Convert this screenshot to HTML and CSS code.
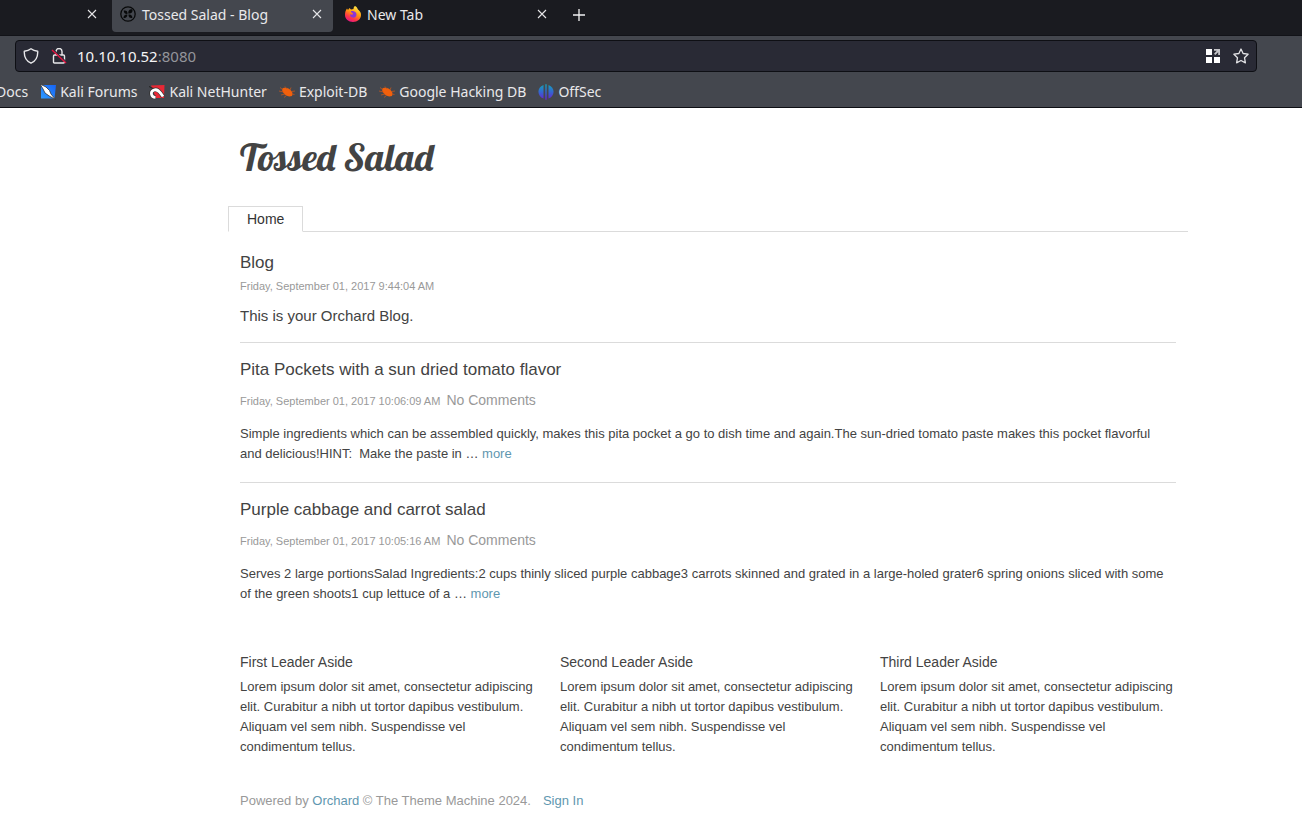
FILE: index.html
```html
<!DOCTYPE html>
<html lang="en">
<head>
<meta charset="utf-8">
<title>Tossed Salad - Blog</title>
<link rel="stylesheet" href="styles.css">
</head>
<body>
<svg class="defs" aria-hidden="true">
  <defs>
    <linearGradient id="fox" x1="0.8" y1="0" x2="0.3" y2="1"><stop offset="0" stop-color="#fff44f"/><stop offset=".45" stop-color="#ff980e"/><stop offset=".75" stop-color="#ff3647"/><stop offset="1" stop-color="#e31587"/></linearGradient>
    <linearGradient id="off" gradientUnits="userSpaceOnUse" x1="0" y1="0" x2="0" y2="16"><stop offset="0" stop-color="#12a5b8"/><stop offset=".5" stop-color="#3466d0"/><stop offset="1" stop-color="#6a1fd0"/></linearGradient>
    <linearGradient id="blue" x1="0" y1="1" x2="1" y2="0"><stop offset="0" stop-color="#2f9bff"/><stop offset="1" stop-color="#1663f5"/></linearGradient>
    <symbol id="close" viewBox="0 0 10 10"><path d="M1 1l8 8M9 1L1 9" fill="none" stroke="#e6e6e8" stroke-width="1.1"/></symbol>
    <symbol id="bug" viewBox="0 0 16 16"><path d="M3 5C4.500 3 9 3.500 11.500 6c2 2 2.500 3.500 1.500 6-2.500.8-4.500.5-6.500-1C4.500 9.500 3 7.500 3 5z" fill="#f2600c"/><path d="M4 6L1 3.500M4.500 8L0 7M6 10l-4 1M8 11l-3 2.500M8 5L6 2.500M11 6l1-2.500M12.500 7.500L16 7M13 10l2.500.5" fill="none" stroke="#c2571d" stroke-width=".8"/></symbol>
  </defs>
</svg>
<header class="browser">
  <div class="tabs">
    <div class="tab tab-first"><button class="icon-button" aria-label="Close tab"><svg class="close"><use href="#close"/></svg></button></div>
    <div class="tab tab-active">
      <svg class="icon" viewBox="0 0 16 16"><circle cx="8" cy="8" r="7.200" fill="none" stroke="#08090a" stroke-width="1.300"/><path d="M7.500 8C5 8.300 3.500 6.500 3.800 4.500 6 4 7.800 5 7.500 8zM8.300 7.500C8 5 9.500 2.800 12.500 3.500 13 6.500 11 8 8.300 7.500zM7.300 8.600C7.500 11 6 12.500 3.500 12 3.500 10 5 8.300 7.300 8.600zM8.500 8.500c2.500-.3 4 1 3.800 3.500-2.300.5-4-.8-3.800-3.500z" fill="#08090a"/></svg>
      <span class="tab-title">Tossed Salad - Blog</span>
      <button class="icon-button" aria-label="Close tab"><svg class="close"><use href="#close"/></svg></button>
    </div>
    <div class="tab tab-new">
      <svg class="icon" viewBox="0 0 16 16"><path d="M10 0c2 1 2.500 2.500 3 3.500 2 1.500 3 3 3 5.500 0 4-3.500 7-8 7s-8-3-8-7c0-2.500.5-4.500 2-6.500L3 4l1.500-2L6 3.500 8.500 3C8.500 1.500 9 .5 10 0z" fill="url(#fox)"/><path d="M6 5c3-.5 5.500 1 5.500 3.500S9.500 12 7.500 11.500 5 10 5 8.500l2.500.3L8 7.500 6 6z" fill="#8b35d8"/></svg>
      <span class="tab-title">New Tab</span>
      <button class="icon-button" aria-label="Close tab"><svg class="close"><use href="#close"/></svg></button>
    </div>
    <button class="icon-button add" aria-label="New tab"><svg class="plus" viewBox="0 0 14 14"><path d="M7 1v12M1 7h12" fill="none" stroke="#f1f1f2" stroke-width="1.300"/></svg></button>
  </div>
  <div class="toolbar">
    <div class="address">
      <svg class="icon" viewBox="0 0 16 16"><path d="M8 .8c2 1.500 4 2.100 6.700 2.400.3 5.500-1.800 9.800-6.700 12C3.100 13 1 8.700 1.300 3.200 4 2.900 6 2.300 8 .8z" fill="none" stroke="#e8e8ea" stroke-width="1.400" stroke-linejoin="round"/></svg>
      <svg class="icon" viewBox="0 0 16 16"><path d="M5 7V3.500a3 3 0 0 1 6 0V7M3.500 7h9q1 0 1 1v6q0 1-1 1h-9q-1 0-1-1V8q0-1 1-1z" fill="none" stroke="#e8e8ea" stroke-width="1.400"/><path d="M2 1.500l14 13" stroke="#292a35" stroke-width="1.200"/><path d="M1 2l14 13" stroke="#e2123f" stroke-width="1.400"/></svg>
      <a class="url" href="#">10.10.10.52<span class="port">:8080</span></a>
      <button class="icon-button" aria-label="Apps"><svg class="icon" viewBox="0 0 16 16"><path d="M1 1h6v6H1zM1 9h6v6H1zM9 9h6v6H9z" fill="#fff"/><path d="M9 1h6v6h-1.800V4.200L10.300 7 9 5.700l2.800-2.900H9z" fill="#c4c4c8"/></svg></button>
      <button class="icon-button" aria-label="Bookmark this page"><svg class="icon" viewBox="0 0 16 16"><path d="M8 1l2.100 4.500 5 .7-3.600 3.500.9 5.100L8 12.500l-4.400 2.300.9-5.100L.9 6.200l5-.7z" fill="none" stroke="#e2e2e5" stroke-width="1.300" stroke-linejoin="round"/></svg></button>
    </div>
  </div>
  <nav class="bookmarks">
    <a href="#">Docs</a>
    <a href="#"><svg class="icon" viewBox="0 0 16 16"><path d="M1 1h15l-1.500 13.500H1z" fill="url(#blue)"/><path d="M0 0l6 3 3.500 3.500L11 10l4.500 5.500L10 12.500 5 9 3 5z" fill="#fff" stroke="#333" stroke-width=".8"/></svg>Kali Forums</a>
    <a href="#"><svg class="icon" viewBox="0 0 16 16"><path d="M2 1.500l13.500-.5L15 14H7z" fill="#e92835"/><path d="M6.500 13.500C2 13 1 8 4.500 6.200S10.500 7 14 12.500" fill="none" stroke="#333" stroke-width="4.200"/><path d="M0 2.500l3 1.500 3 .8" fill="none" stroke="#222" stroke-width="1"/><path d="M6.500 13.500C2 13 1 8 4.500 6.200S10.500 7 14 12.500" fill="none" stroke="#fff" stroke-width="2.700"/></svg>Kali NetHunter</a>
    <a href="#"><svg class="icon"><use href="#bug"/></svg>Exploit-DB</a>
    <a href="#"><svg class="icon"><use href="#bug"/></svg>Google Hacking DB</a>
    <a href="#"><svg class="icon" viewBox="0 0 16 16"><path d="M5.500 1v13.500C-1 12.500-1.500 3.500 5.500 1zM7.300.3h1.400v15.500H7.300zM10.500 1v13.500c6.500-2 7-11 0-13.500z" fill="url(#off)"/></svg>OffSec</a>
  </nav>
</header>
<div class="page">
  <h1 class="site-name">Tossed Salad</h1>
  <nav class="menu"><a class="menu-item" href="#">Home</a></nav>
  <main class="content">
    <section class="intro">
      <h2>Blog</h2>
      <p class="date">Friday, September 01, 2017 9:44:04 AM</p>
      <p class="description">This is your Orchard Blog.</p>
    </section>
    <article class="post">
      <h2>Pita Pockets with a sun dried tomato flavor</h2>
      <p class="meta"><span class="date">Friday, September 01, 2017 10:06:09 AM</span><span class="comments">No Comments</span></p>
      <p class="summary">Simple ingredients which can be assembled quickly, makes this pita pocket a go to dish time and again.The sun-dried tomato paste makes this pocket flavorful and delicious!HINT:&nbsp; Make the paste in … <a href="#">more</a></p>
    </article>
    <article class="post">
      <h2>Purple cabbage and carrot salad</h2>
      <p class="meta"><span class="date">Friday, September 01, 2017 10:05:16 AM</span><span class="comments">No Comments</span></p>
      <p class="summary">Serves 2 large portionsSalad Ingredients:2 cups thinly sliced purple cabbage3 carrots skinned and grated in a large-holed grater6 spring onions sliced with some of the green shoots1 cup lettuce of a … <a href="#">more</a></p>
    </article>
    <div class="asides">
      <aside><h3>First Leader Aside</h3><p>Lorem ipsum dolor sit amet, consectetur adipiscing elit. Curabitur a nibh ut tortor dapibus vestibulum. Aliquam vel sem nibh. Suspendisse vel condimentum tellus.</p></aside>
      <aside><h3>Second Leader Aside</h3><p>Lorem ipsum dolor sit amet, consectetur adipiscing elit. Curabitur a nibh ut tortor dapibus vestibulum. Aliquam vel sem nibh. Suspendisse vel condimentum tellus.</p></aside>
      <aside><h3>Third Leader Aside</h3><p>Lorem ipsum dolor sit amet, consectetur adipiscing elit. Curabitur a nibh ut tortor dapibus vestibulum. Aliquam vel sem nibh. Suspendisse vel condimentum tellus.</p></aside>
    </div>
    <footer class="footer"><span>Powered by <a href="#">Orchard</a> © The Theme Machine 2024.</span><a href="#">Sign In</a></footer>
  </main>
</div>
</body>
</html>
```
FILE: styles.css
```css
* { box-sizing: border-box; }
body { margin: 0; background: #fff; color: #434343; font: 13px/20px "Liberation Sans", Arial, sans-serif; }
h1, h2, h3, p { margin: 0; font-weight: 400; }
a { color: #5f97af; text-decoration: none; }
.defs { position: absolute; width: 0; height: 0; }
.browser { background: #44474e; color: #e9e9eb; font: 14px/20px "Noto Sans", sans-serif; border-bottom: 1px solid #0e0f14; overflow: hidden; }
.icon { display: block; flex: none; width: 16px; height: 16px; }
.close { display: block; width: 10px; height: 10px; }
.plus { display: block; width: 14px; height: 14px; }
.icon-button { display: flex; flex: none; padding: 0; border: 0; background: none; }
.tabs { display: flex; height: 36px; padding-bottom: 4px; background: #1a1b20; border-bottom: 1px solid #121318; }
.tab { display: flex; align-items: center; height: 32px; padding: 0 11px 4px 8px; gap: 6px; }
.tab-first { width: 108px; justify-content: flex-end; }
.tab-active { width: 221px; margin-left: 4px; background: #44474e; border-radius: 0 0 4px 4px; }
.tab-new { width: 225px; padding-left: 12px; }
.tab-title { flex: 1; padding-top: 2px; white-space: nowrap; }
.add { align-items: center; height: 30px; margin-left: 14px; }
.toolbar { padding: 4px 45px 4px 15px; }
.address { display: flex; align-items: center; gap: 10px; height: 32px; padding: 0 7px; background: #292a35; border: 1px solid #0e0f14; border-radius: 4px; }
.address .icon + .icon { margin-left: 2px; }
.address .icon-button + .icon-button { margin-left: 2px; }
.url { flex: 1; color: #f5f5f6; font-size: 15px; }
.port { color: #94959b; }
.bookmarks { display: flex; align-items: center; gap: 12px; height: 31px; margin-left: -4px; white-space: nowrap; }
.bookmarks a { display: flex; align-items: center; gap: 4px; color: #e9e9eb; }
.page { padding: 0 114px 0 228px; }
.site-name { padding: 24px 12px; font: 400 38px/50px Lobster, "Liberation Serif", serif; }
.menu { display: flex; border-bottom: 1px solid #dbdbdb; }
.menu-item { margin-bottom: -1px; padding: 2px 18px; border: 1px solid #dbdbdb; border-bottom-color: #fff; color: #333; font-size: 14px; }
.content { padding: 20px 12px; }
h2 { font-size: 17px; line-height: 22px; }
.date { color: #999; font-size: 11px; }
.intro .date { padding-top: 2px; }
.description { padding: 10px 0 16px; font-size: 15px; }
.post { padding: 16px 0 18px; border-top: 1px solid #dbdbdb; }
.meta { display: flex; align-items: baseline; gap: 6px; padding: 9px 0 13px; color: #999; }
.comments { font-size: 14px; }
.summary { padding-right: 8px; }
.asides { display: grid; grid-template-columns: repeat(3, 1fr); gap: 24px; padding-top: 30px; }
h3 { padding-bottom: 4px; font-size: 14px; line-height: 21px; }
.footer { display: flex; gap: 12px; padding-top: 34px; color: #999; }
```
